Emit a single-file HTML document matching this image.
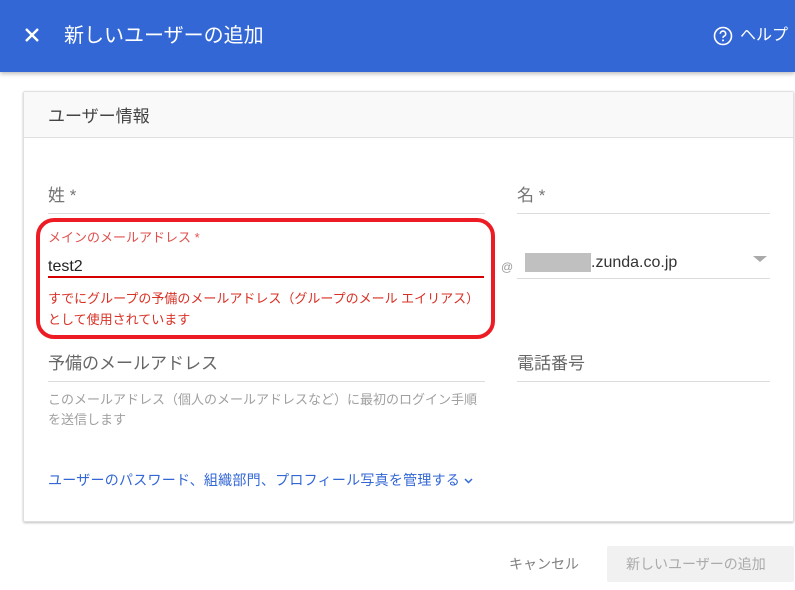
<!DOCTYPE html>
<html><head><meta charset="utf-8"><style>
*{margin:0;padding:0;box-sizing:border-box}
body{width:795px;height:590px;background:#fff;font-family:"Liberation Sans","Noto Sans CJK JP",sans-serif;position:relative;overflow:hidden}
.a{position:absolute;white-space:nowrap}
.line{position:absolute;height:1px;background:#dcdcdc}
</style></head><body>
<div class="a" style="left:0;top:0;width:795px;height:72px;background:#3367d6;box-shadow:0 2px 4px rgba(0,0,0,.25)"></div>
<svg class="a" style="left:24px;top:27px" width="16" height="16" viewBox="0 0 16 16"><path d="M2 2L14 14M14 2L2 14" stroke="#fff" stroke-width="2.4"/></svg>
<div class="a" style="left:64px;top:22px;font-size:20px;color:#fff;line-height:28px">新しいユーザーの追加</div>
<svg class="a" style="left:713px;top:26px" width="20" height="20" viewBox="0 0 20 20"><circle cx="10" cy="10" r="8.5" fill="none" stroke="#fff" stroke-width="1.6"/><path d="M7.3 7.8a2.7 2.7 0 1 1 3.6 2.5c-.7.3-.9.8-.9 1.6" fill="none" stroke="#fff" stroke-width="1.6"/><circle cx="10" cy="14.4" r="1" fill="#fff"/></svg>
<div class="a" style="left:740px;top:25px;font-size:16px;color:#fff;line-height:22px">ヘルプ</div>

<div class="a" style="left:23px;top:91px;width:771px;height:431px;border:1px solid #e0e0e0;border-radius:2px;box-shadow:0 1px 2px rgba(0,0,0,.25)"></div>
<div class="a" style="left:24px;top:92px;width:769px;height:46px;background:#f9f9f9;border-bottom:1px solid #e0e0e0"></div>
<div class="a" style="left:48px;top:105px;font-size:17px;color:#444;line-height:24px">ユーザー情報</div>

<div class="a" style="left:48px;top:184px;font-size:17px;color:#757575;line-height:24px">姓 *</div>
<div class="line" style="left:48px;top:213px;width:437px"></div>
<div class="a" style="left:517px;top:184px;font-size:17px;color:#757575;line-height:24px">名 *</div>
<div class="line" style="left:517px;top:213px;width:253px"></div>

<div class="a" style="left:36px;top:218px;width:459px;height:121px;border:4px solid #ed1c24;border-radius:18px"></div>
<div class="a" style="left:48px;top:229px;font-size:13px;color:#e0514f;line-height:18px">メインのメールアドレス *</div>
<div class="a" style="left:48px;top:256px;font-size:16px;color:#222;line-height:22px">test2</div>
<div class="a" style="left:48px;top:276px;width:436px;height:2px;background:#d50000"></div>
<div class="a" style="left:48px;top:288px;font-size:13px;color:#d93025;line-height:21px">すでにグループの予備のメールアドレス（グループのメール エイリアス）<br>として使用されています</div>

<div class="a" style="left:501px;top:260px;font-size:12px;color:#999">@</div>
<div class="a" style="left:525px;top:253px;width:66px;height:19px;background:#c0c0c0"></div>
<div class="a" style="left:591px;top:252px;font-size:16px;color:#333;line-height:22px">.zunda.co.jp</div>
<svg class="a" style="left:753px;top:255px" width="14" height="8"><path d="M0 1H14L7 7Z" fill="#aaa"/></svg>
<div class="line" style="left:517px;top:278px;width:253px"></div>

<div class="a" style="left:48px;top:352px;font-size:17px;color:#666;line-height:24px">予備のメールアドレス</div>
<div class="line" style="left:48px;top:381px;width:437px"></div>
<div class="a" style="left:517px;top:352px;font-size:17px;color:#666;line-height:24px">電話番号</div>
<div class="line" style="left:517px;top:381px;width:253px"></div>
<div class="a" style="left:48px;top:390px;font-size:13px;color:#a0a0a0;line-height:20px">このメールアドレス（個人のメールアドレスなど）に最初のログイン手順<br>を送信します</div>

<div class="a" style="left:48px;top:470px;font-size:14px;color:#3367d6;line-height:20px;letter-spacing:0.25px">ユーザーのパスワード、組織部門、プロフィール写真を管理する <svg width="9" height="6" style="vertical-align:1px"><path d="M1 1L4.5 4.5L8 1" fill="none" stroke="#3367d6" stroke-width="1.5"/></svg></div>

<div class="a" style="left:509px;top:554px;font-size:14px;color:#808080;line-height:20px">キャンセル</div>
<div class="a" style="left:607px;top:546px;width:187px;height:36px;background:#f1f1f1;border-radius:2px"></div>
<div class="a" style="left:626px;top:554px;font-size:14px;color:#aaa;line-height:20px">新しいユーザーの追加</div>
</body></html>
